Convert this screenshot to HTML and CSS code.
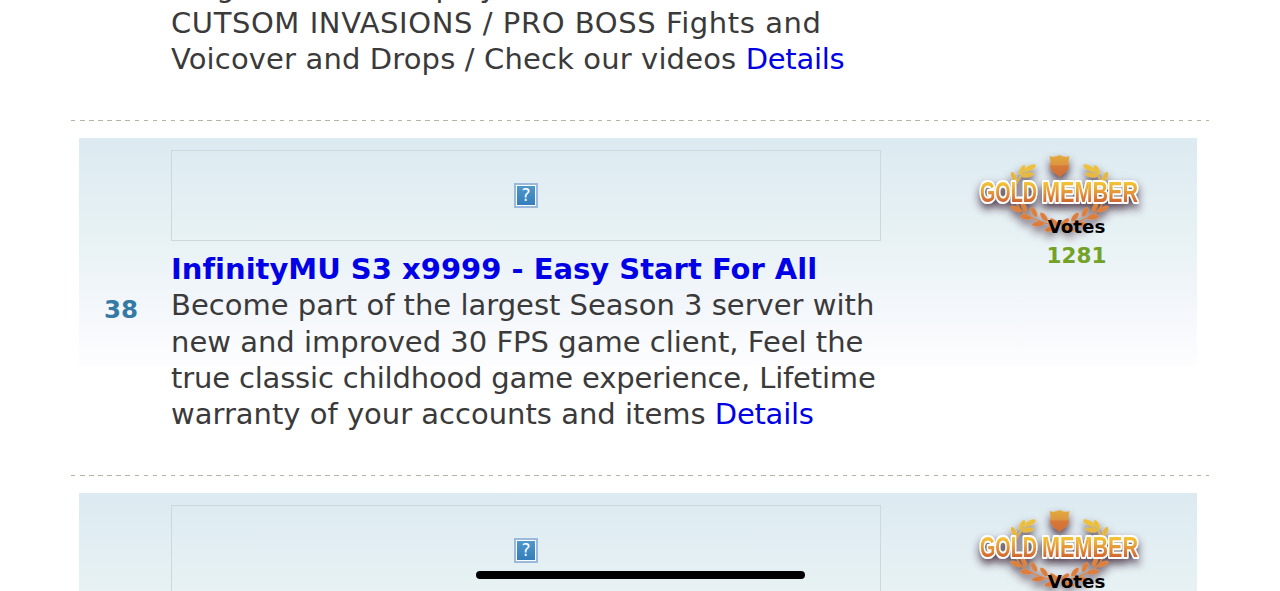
FILE: index.html
```html
<!DOCTYPE html>
<html>
  <head>
    <meta charset="utf-8" />
    <meta name="viewport" content="width=device-width, initial-scale=1" />
    <title>Top servers</title>
    <link rel="stylesheet" href="styles.css">
  </head>

  <body>
    <svg class="defs" aria-hidden="true">
      <defs>
        <linearGradient id="gold" gradientUnits="userSpaceOnUse" x1="0" y1="10" x2="0" y2="82">
          <stop offset="0" stop-color="#f0c93a"/>
          <stop offset=".25" stop-color="#e6b544"/>
          <stop offset=".55" stop-color="#dd8540"/>
          <stop offset="1" stop-color="#dc7838"/>
        </linearGradient>
        <linearGradient id="shield" x1="0" y1="0" x2="0" y2="1">
          <stop offset="0" stop-color="#e3ad3c"/>
          <stop offset=".45" stop-color="#dc9440"/>
          <stop offset=".5" stop-color="#d67a38"/>
          <stop offset="1" stop-color="#cf6c38"/>
        </linearGradient>
        <linearGradient id="letters" gradientUnits="userSpaceOnUse" x1="0" y1="31" x2="0" y2="53">
          <stop offset="0" stop-color="#f6ca34"/>
          <stop offset=".5" stop-color="#e59a3a"/>
          <stop offset="1" stop-color="#cd6030"/>
        </linearGradient>
        <filter id="shade" x="-20%" y="-20%" width="140%" height="150%">
          <feDropShadow dx="0" dy="5" stdDeviation="4" flood-color="#3a2030" flood-opacity=".85"/>
        </filter>
        <g id="branch" fill="url(#gold)">
          <path d="M56 22Q44 30 45 45T60 67T88 76" fill="none" stroke="url(#gold)" stroke-width="1.3"/>
          <ellipse cx="60" cy="18" rx="6.500" ry="2.500" transform="rotate(-28 60 18)"/>
          <ellipse cx="52" cy="20" rx="5.500" ry="2.300" transform="rotate(-62 52 20)"/>
          <ellipse cx="58" cy="25" rx="6" ry="2.300" transform="rotate(-12 58 25)"/>
          <ellipse cx="44" cy="27" rx="5.500" ry="2.400" transform="rotate(65 44 27)"/>
          <ellipse cx="46" cy="59" rx="6" ry="2.400" transform="rotate(25 46 59)"/>
          <ellipse cx="54" cy="57" rx="5" ry="2.300" transform="rotate(65 54 57)"/>
          <ellipse cx="56" cy="67" rx="6" ry="2.400" transform="rotate(8 56 67)"/>
          <ellipse cx="64" cy="62" rx="5.500" ry="2.400" transform="rotate(62 64 62)"/>
          <ellipse cx="68" cy="74" rx="6" ry="2.400" transform="rotate(-5 68 74)"/>
          <ellipse cx="74" cy="67" rx="5.500" ry="2.400" transform="rotate(52 74 67)"/>
          <ellipse cx="80" cy="79" rx="5.500" ry="2.300" transform="rotate(-15 80 79)"/>
          <ellipse cx="84" cy="72" rx="5" ry="2.200" transform="rotate(38 84 72)"/>
        </g>
        <symbol id="gold-member" viewBox="0 0 180 100">
          <g filter="url(#shade)">
            <use href="#branch"/>
            <use href="#branch" transform="matrix(-1 0 0 1 179 0)"/>
            <path d="M79.500 6Q84 8 89.500 5Q95 8 99.500 6L98.500 11Q100 19 96 22Q93 24 89.500 27Q86 24 83 22Q79 19 80.500 11Z" fill="url(#shield)"/>
            <text x="10" y="52" textLength="57" lengthAdjust="spacingAndGlyphs" class="badge-text">GOLD</text>
            <text x="72" y="52" textLength="96" lengthAdjust="spacingAndGlyphs" class="badge-text">MEMBER</text>
          </g>
        </symbol>
      </defs>
    </svg>

    <div class="list">
      <div class="entry first">
        <div class="rank"></div>
        <div class="info">
          <p class="line">Large Scale Gameplay / Hundreds of Items /</p>
          <p class="line wide">CUTSOM INVASIONS / PRO BOSS Fights and</p>
          <p class="line spaced">Voicover and Drops / Check our videos <a href="#">Details</a></p>
        </div>
      </div>

      <div class="entry">
        <div class="rank">38</div>
        <div class="info">
          <div class="banner"><span class="missing">?</span></div>
          <h2><a href="#">InfinityMU S3 x9999 - Easy Start For All</a></h2>
          <p class="line">Become part of the largest Season 3 server with</p>
          <p class="line">new and improved 30 FPS game client, Feel the</p>
          <p class="line tight">true classic childhood game experience, Lifetime</p>
          <p class="line">warranty of your accounts and items <a href="#">Details</a></p>
        </div>
        <div class="votes">
          <svg class="badge"><use href="#gold-member"/></svg>
          <b>Votes</b>
          <span class="count">1281</span>
        </div>
      </div>

      <div class="entry last">
        <div class="rank"></div>
        <div class="info">
          <div class="banner"><span class="missing">?</span></div>
        </div>
        <div class="votes">
          <svg class="badge"><use href="#gold-member"/></svg>
          <b>Votes</b>
        </div>
      </div>
    </div>
    <div class="home-bar"></div>
  </body>
</html>
```
FILE: styles.css
```css
body {
  margin: 0;
  height: 591px;
  overflow: hidden;
  background: #fff;
  color: #3a3a3a;
  font-family: Verdana, "DejaVu Sans", sans-serif;
  font-variant-ligatures: none;
}
a {
  color: #0000e6;
  text-decoration: none;
}
.defs {
  position: absolute;
  width: 0;
  height: 0;
}
.list {
  width: 1138px;
  height: 591px;
  margin-left: 71px;
  overflow: hidden;
}
.entry {
  display: flex;
  box-sizing: border-box;
  height: 355px;
  padding: 29px 12px 0 8px;
  background: linear-gradient(#dceaf1, #e8f2f4 45%, #f0f5fa 65%, #fdfdfe) no-repeat 8px 17px / 1118px 228px;
  position: relative;
}
.entry::before {
  content: "";
  position: absolute;
  left: 0;
  top: -1px;
  width: 1138px;
  height: 1px;
  background: repeating-linear-gradient(90deg, #b4b4a4 0 4.500px, transparent 4.500px 9.080px);
}
.entry.first {
  height: 121px;
  padding-top: 0;
  background: none;
}
.entry.last {
  height: 115px;
}
.entry.first::before {
  display: none;
}
.first .info {
  margin-top: -31.400px;
}
.rank {
  width: 92px;
  box-sizing: border-box;
  padding: 145px 8px 0 0;
  text-align: center;
  color: #3579a5;
  font-size: 24.500px;
  font-weight: bold;
  line-height: 30px;
}
.first .rank,
.last .rank {
  padding-top: 0;
}
.info {
  width: 710px;
}
.banner {
  display: flex;
  align-items: center;
  justify-content: center;
  box-sizing: border-box;
  height: 91px;
  border: 1px solid #cbd8dc;
}
.missing {
  width: 18px;
  height: 19px;
  border: 1px solid #fff;
  outline: 2px solid #9bb9dc;
  background: linear-gradient(#4e98cc, #347dba);
  color: #fff;
  font-size: 17px;
  line-height: 19px;
  text-align: center;
}
h2 {
  margin: 10px 0 0;
  font-size: 29px;
  line-height: 36.400px;
  white-space: nowrap;
}
.line {
  margin: 0;
  font-size: 29px;
  line-height: 36.300px;
  white-space: nowrap;
}
.line a {
  letter-spacing: -0.250px;
}
.wide {
  letter-spacing: 0.580px;
}
.spaced {
  letter-spacing: 0.140px;
}
.tight {
  letter-spacing: -0.170px;
}
.votes {
  width: 180px;
  margin-left: 89px;
  display: flex;
  flex-direction: column;
  align-items: center;
}
.badge {
  flex-shrink: 0;
  width: 180px;
  height: 100px;
  margin-bottom: -37px;
}
.badge-text {
  font: bold 30px "Liberation Sans", Arial, sans-serif;
  fill: url(#letters);
  stroke: #fff;
  stroke-width: 4px;
  stroke-linejoin: round;
  paint-order: stroke;
}
.votes b {
  position: relative;
  margin-left: 33px;
  color: #000;
  font-size: 18.300px;
  line-height: 28px;
}
.count {
  margin-left: 33px;
  color: #72a226;
  font-size: 21.500px;
  font-weight: bold;
  line-height: 30px;
}
.home-bar {
  position: absolute;
  left: 476px;
  top: 571px;
  width: 329px;
  height: 8px;
  border-radius: 4px;
  background: #000;
}
```
